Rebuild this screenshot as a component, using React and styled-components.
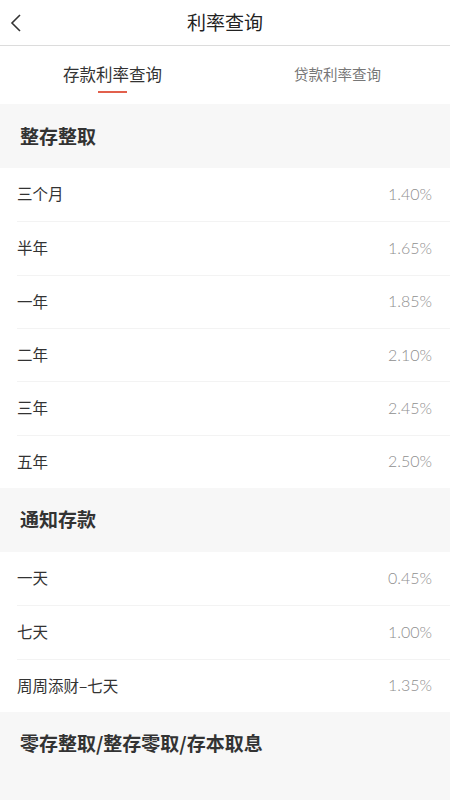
import styled, { createGlobalStyle } from 'styled-components';

const GlobalStyle = createGlobalStyle`
  body {
    margin: 0;
    background: #fff;
    font-family: "Noto Sans CJK SC", "Noto Sans", sans-serif;
  }
`;

const Page = styled.div`
  width: 450px;
  min-height: 800px;
  background: #f7f7f7;
`;

const NavBar = styled.div`
  position: relative;
  height: 45px;
  display: flex;
  align-items: center;
  justify-content: center;
  background: #fff;
  border-bottom: 1px solid #dcdcdc;
`;

const BackButton = styled.div`
  position: absolute;
  left: 8px;
  top: 12px;
  width: 16px;
  height: 22px;
  display: flex;
`;

const Title = styled.div`
  font-size: 19px;
  color: #222;
  line-height: 1;
  padding-bottom: 2px;
`;

const Tabs = styled.div`
  height: 58px;
  display: flex;
  background: #fff;
`;

const Tab = styled.div`
  flex: 1;
  display: flex;
  flex-direction: column;
  align-items: center;
  padding-top: 18px;
  font-size: ${p => (p.active ? '16.5px' : '14.5px')};
  color: ${p => (p.active ? '#333' : '#777')};
  line-height: 20px;
`;

const Underline = styled.div`
  width: 29px;
  height: 2px;
  margin-top: 7px;
  background: ${p => (p.show ? '#e2604c' : 'transparent')};
`;

const SectionHeader = styled.div`
  height: 64px;
  box-sizing: border-box;
  display: flex;
  align-items: center;
  padding: 0 0 2px 20px;
  font-size: 19px;
  line-height: 1;
  font-weight: bold;
  color: #333;
`;

const List = styled.div`
  background: #fff;
  padding-left: 17px;
`;

const Row = styled.div`
  height: 53.33px;
  box-sizing: border-box;
  display: flex;
  align-items: center;
  justify-content: space-between;
  padding: 0 18px 1px 0;
  border-top: ${p => (p.first ? 'none' : '1px solid #f3f3f3')};
  line-height: 1;
`;

const Label = styled.span`
  font-size: 15.5px;
  color: #333;
`;

const Value = styled.span`
  font-family: "Lato", "Noto Sans", sans-serif;
  font-size: 16px;
  font-weight: 300;
  color: #8f8f8f;
`;

const sections = [
  {
    title: '整存整取',
    rows: [
      ['三个月', '1.40%'],
      ['半年', '1.65%'],
      ['一年', '1.85%'],
      ['二年', '2.10%'],
      ['三年', '2.45%'],
      ['五年', '2.50%'],
    ],
  },
  {
    title: '通知存款',
    rows: [
      ['一天', '0.45%'],
      ['七天', '1.00%'],
      ['周周添财–七天', '1.35%'],
    ],
  },
  { title: '零存整取/整存零取/存本取息', rows: [] },
];

const App = () => (
  <Page>
    <GlobalStyle />
    <NavBar>
      <BackButton>
        <svg width="16" height="22" viewBox="0 0 16 22">
          <path d="M12 3 L4 11 L12 19" fill="none" stroke="#333" strokeWidth="1.6" />
        </svg>
      </BackButton>
      <Title>利率查询</Title>
    </NavBar>
    <Tabs>
      <Tab active>
        存款利率查询
        <Underline show />
      </Tab>
      <Tab>
        贷款利率查询
        <Underline />
      </Tab>
    </Tabs>
    {sections.map(s => (
      <div key={s.title}>
        <SectionHeader>{s.title}</SectionHeader>
        {s.rows.length > 0 && (
          <List>
            {s.rows.map(([label, value], i) => (
              <Row key={label} first={i === 0}>
                <Label>{label}</Label>
                <Value>{value}</Value>
              </Row>
            ))}
          </List>
        )}
      </div>
    ))}
  </Page>
);

export default App;
